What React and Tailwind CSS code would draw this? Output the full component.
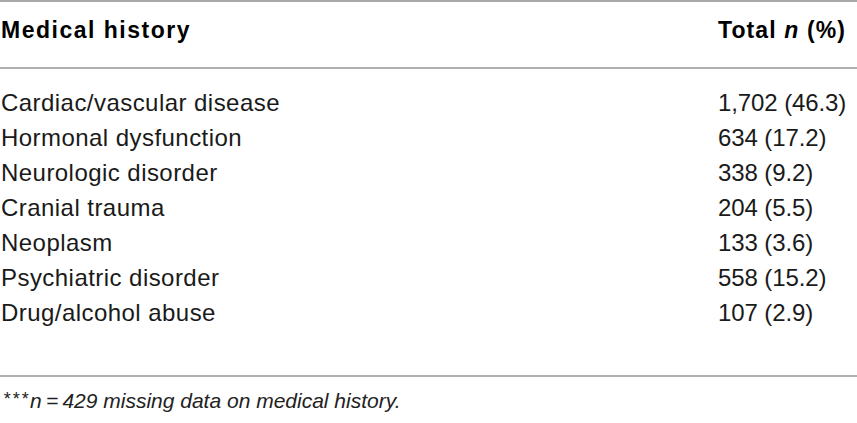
import React from 'react'

const rows = [
    ["Cardiac/vascular disease", "1,702 (46.3)"],
    ["Hormonal dysfunction", "634 (17.2)"],
    ["Neurologic disorder", "338 (9.2)"],
    ["Cranial trauma", "204 (5.5)"],
    ["Neoplasm", "133 (3.6)"],
    ["Psychiatric disorder", "558 (15.2)"],
    ["Drug/alcohol abuse", "107 (2.9)"],
];

const App = () => {
    return (
        <div className="w-[857px] h-[423px] bg-white text-[#1a1a1a] font-['Liberation_Sans',Arial,sans-serif]">
            <div className="border-t-2 border-[#a8a8a8]">
                <div className="flex items-center h-[67px] pb-[8px] border-b-2 border-[#b0b0b0] text-[23px] font-bold text-black">
                    <div className="flex-1 pl-[1px] tracking-[1.5px]">Medical history</div>
                    <div className="w-[139px] tracking-[1.1px]">Total <i>n</i> (%)</div>
                </div>
                <div className="pt-[16px] pb-[45px] border-b-2 border-[#b0b0b0]">
                    {rows.map(([label, value]) => (
                        <div key={label} className="flex items-center h-[35px] text-[24px] leading-none">
                            <div className="flex-1 pl-[1px] tracking-[0.45px]">{label}</div>
                            <div className="w-[139px] tracking-[-0.1px]">{value}</div>
                        </div>
                    ))}
                </div>
                <div className="pt-[8px] pl-[3px] text-[21px] italic text-[#222]">
                    <span className="relative -top-[3px] text-[18px] tracking-[2px]">***</span><span>n</span>
                    <span>{"\u2009=\u2009"}429 missing data on medical history.</span>
                </div>
            </div>
        </div>
    )
}

export default App
